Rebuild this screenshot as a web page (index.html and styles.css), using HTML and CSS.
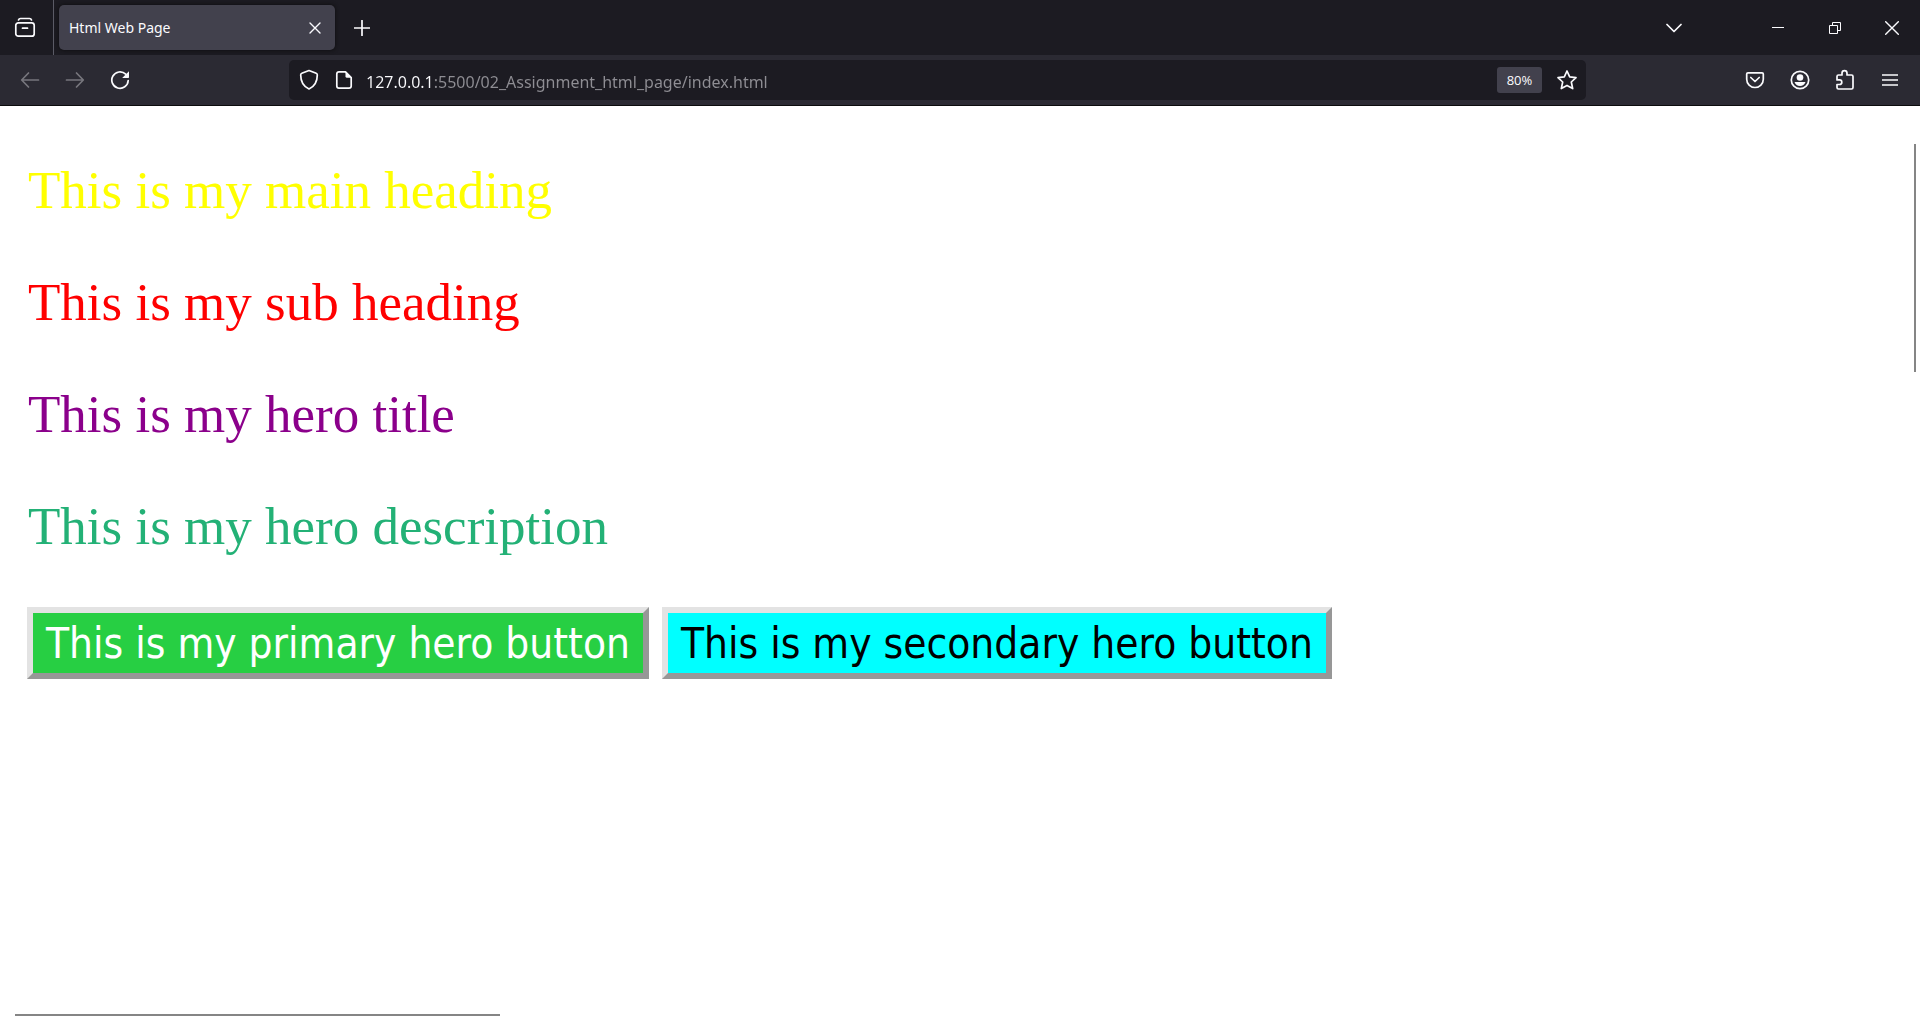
FILE: index.html
```html
<!DOCTYPE html>
<html lang="en">
<head>
<meta charset="utf-8">
<title>Html Web Page</title>
<link rel="stylesheet" href="styles.css">
</head>
<body>
<header class="chrome">
  <div class="tabs">
    <button class="icon-btn view-btn" aria-label="View">
      <svg width="22" height="22" viewBox="0 0 22 22"><path d="M4.500 3Q5 1.500 6.500 1.500h9Q17 1.500 17.500 3"/><rect x="1.800" y="5.800" width="18.400" height="13.400" rx="2.500"/><path d="M8.500 11.200h5"/></svg>
    </button>
    <div class="tab">
      <span class="tab-title">Html Web Page</span>
      <button class="tab-close" aria-label="Close tab"><svg width="12" height="12" viewBox="0 0 12 12"><path class="cross" d="M1 1l10 10M11 1L1 11"/></svg></button>
    </div>
    <button class="icon-btn" aria-label="New tab"><svg width="16" height="16" viewBox="0 0 16 16"><path d="M8 .500v15M.500 8h15"/></svg></button>
    <div class="grow"></div>
    <button class="icon-btn list-btn" aria-label="List all tabs"><svg width="16" height="10" viewBox="0 0 16 10"><path d="M1 1.500l7 7 7-7"/></svg></button>
    <button class="win-btn" aria-label="Minimize"><svg width="12" height="12" viewBox="0 0 12 12"><path class="thin" d="M0 5.500h12"/></svg></button>
    <button class="win-btn" aria-label="Restore"><svg width="12" height="12" viewBox="0 0 12 12"><path class="thin" d="M.500 3.500h8v8h-8zM3.500 3V.500h8v8H9"/></svg></button>
    <button class="win-btn" aria-label="Close"><svg width="14" height="14" viewBox="0 0 14 14"><path class="cross" d="M.700.700l12.600 12.600M13.300.700L.700 13.300"/></svg></button>
  </div>
  <div class="toolbar">
    <button class="icon-btn" aria-label="Back" disabled><svg width="20" height="18" viewBox="0 0 20 18"><path d="M18.500 9H2M8.500 2L1.700 9l6.800 7"/></svg></button>
    <button class="icon-btn" aria-label="Forward" disabled><svg width="20" height="18" viewBox="0 0 20 18"><path d="M1.500 9H18M11.500 2l6.800 7-6.800 7"/></svg></button>
    <button class="icon-btn" aria-label="Reload"><svg width="20" height="20" viewBox="0 0 20 20"><path d="M18.200 10.500A8.200 8.200 0 1 1 15.700 4.200"/><path class="solid" d="M19 1.200v6.100q0 .700-.700.700h-6.100z"/></svg></button>
    <div class="spacer"></div>
    <div class="urlbar">
      <button class="url-btn" aria-label="Protections"><svg width="20" height="22" viewBox="0 0 20 22"><path d="M10 1.500L17.200 4.300Q18.300 4.700 18.300 6c0 6.500-2.800 11.500-8.300 14C4.500 17.500 1.700 12.500 1.700 6Q1.700 4.700 2.800 4.300z"/></svg></button>
      <button class="url-btn" aria-label="Site information"><svg width="18" height="20" viewBox="0 0 18 20"><path d="M10.500 1.800H4Q1.800 1.800 1.800 4v12Q1.800 18.200 4 18.200h10q2.200 0 2.200-2.200V7.500z"/><path class="solid" d="M10.500 1.200l6.500 6.500h-5q-1.500 0-1.500-1.500z"/></svg></button>
      <input class="url" type="text" aria-label="Address" value="127.0.0.1:5500/02_Assignment_html_page/index.html">
      <button class="zoom">80%</button>
      <button class="url-btn" aria-label="Bookmark"><svg width="22" height="22" viewBox="0 0 22 22"><path d="M11 2l2.700 5.900 6.300.700-4.700 4.400 1.400 6.600L11 16.400l-5.700 3.200 1.400-6.600L2 8.600l6.300-.700z"/></svg></button>
    </div>
    <div class="spacer"></div>
    <button class="icon-btn" aria-label="Pocket"><svg width="20" height="18" viewBox="0 0 20 18"><path d="M3 1.800h14q1.300 0 1.300 1.300v5.100a8.300 8.300 0 0 1-16.600 0V3.100Q1.700 1.800 3 1.800zM5.800 6.500L10 10.500l4.200-4"/></svg></button>
    <button class="icon-btn" aria-label="Account"><svg width="20" height="20" viewBox="0 0 20 20"><circle cx="10" cy="10" r="8.700"/><circle class="solid" cx="10" cy="7.500" r="3.300"/><path class="solid" d="M4.500 12h11q-1.500 4-5.500 4t-5.500-4z"/></svg></button>
    <button class="icon-btn" aria-label="Extensions"><svg width="20" height="22" viewBox="0 0 20 22"><path d="M2 9.500V7.500Q2 6 3.500 6H7V4.200a2.500 2.500 0 0 1 5 0V6h4.500Q18 6 18 7.500v11q0 1.500-1.500 1.500h-13Q2 20 2 18.500v-3h2.500a2.300 2.300 0 0 0 0-4.600H2z"/></svg></button>
    <button class="icon-btn" aria-label="Menu"><svg width="16" height="14" viewBox="0 0 16 14"><path d="M.500 2h15M.500 7h15M.500 12h15"/></svg></button>
  </div>
</header>
<main class="page">
  <p class="line main-heading">This is my main heading</p>
  <p class="line sub-heading">This is my sub heading</p>
  <p class="line hero-title">This is my hero title</p>
  <p class="line hero-description">This is my hero description</p>
  <div class="actions">
    <button class="hero-btn primary">This is my primary hero button</button>
    <button class="hero-btn secondary">This is my secondary hero button</button>
  </div>
  <div class="scroll-y"></div>
  <div class="scroll-x"></div>
</main>
</body>
</html>
```
FILE: styles.css
```css
* { box-sizing: border-box; }
body {
  margin: 0;
  min-height: 100vh;
  display: flex;
  flex-direction: column;
  background: #fff;
}
button { padding: 0; border: 0; background: none; color: #fbfbfe; }
svg {
  display: block;
  fill: none;
  stroke: currentColor;
  stroke-width: 1.700;
  stroke-linecap: round;
  stroke-linejoin: round;
}
.thin { stroke-width: 1; stroke-linecap: butt; stroke-linejoin: miter; }
.cross { stroke-width: 1.400; }
.solid { fill: currentColor; stroke: none; }

.chrome {
  background: #2b2a33;
  border-bottom: 1px solid #0c0c0d;
  font-family: "Noto Sans", sans-serif;
}
.tabs { display: flex; align-items: center; height: 55px; background: #1c1b22; }
.icon-btn {
  width: 45px;
  height: 45px;
  display: flex;
  align-items: center;
  justify-content: center;
  flex: none;
}
.icon-btn:disabled { color: #77767d; }
.view-btn { width: 54px; height: 55px; padding-right: 4px; border-right: 1px solid #5b5b66; }
.tab {
  display: flex;
  align-items: center;
  justify-content: space-between;
  width: 276px;
  height: 45px;
  margin: 0 4px 0 5px;
  padding: 0 14px 0 10px;
  border-radius: 5px;
  background: #42414d;
  box-shadow: 0 0 4px #0c0c0d;
}
.tab-title { color: #fbfbfe; font-size: 14px; }
.grow { flex: 1; }
.list-btn { margin-right: 53px; }
.win-btn { width: 57px; height: 45px; display: flex; align-items: center; justify-content: center; }

.toolbar { display: flex; align-items: center; height: 50px; padding: 0 8px 0 7px; }
.spacer { flex: 0 1 146px; }
.urlbar {
  flex: 1;
  display: flex;
  align-items: center;
  height: 40px;
  margin-left: 1px;
  padding: 0 2px;
  border-radius: 5px;
  background: #1c1b22;
}
.url-btn { width: 35px; height: 35px; display: flex; align-items: center; justify-content: center; }
.url {
  flex: 1;
  height: 35px;
  margin-left: 5px;
  padding: 3px 0 0;
  border: 0;
  outline: 0;
  font: 16px "Noto Sans", sans-serif;
  color: transparent;
  background: linear-gradient(to right, #fbfbfe 67px, #8f8e94 67px);
  -webkit-background-clip: text;
  background-clip: text;
}
.zoom {
  width: 45px;
  height: 26px;
  margin-right: 7px;
  border-radius: 3px;
  background: #42414d;
  font: 13px "Open Sans", sans-serif;
}

.page { flex: 1; position: relative; padding: 54px 27px 0; }
.line {
  margin: 0 0 52px;
  padding-left: 1px;
  font: 53px/60px "Liberation Serif", serif;
}
.actions { display: flex; flex-wrap: wrap; gap: 13px; margin-top: -1px; }
.main-heading { color: #ff0; }
.sub-heading { color: #f00; }
.hero-title { color: #8b008b; }
.hero-description { color: #23b176; }
.hero-btn {
  height: 72px;
  padding: 2px 13px 0;
  border: 6px solid;
  border-color: #e3e3e3 #979797 #979797 #e3e3e3;
  font: 42px/58px "DejaVu Sans Condensed", "Open Sans", sans-serif;
}
.primary { background: #27cf43; color: #fff; }
.secondary { background: #0ff; color: #000; }
.scroll-y, .scroll-x { position: absolute; background: #858585; }
.scroll-y { top: 38px; right: 4px; width: 2px; height: 228px; }
.scroll-x { left: 15px; bottom: 2px; width: 485px; height: 2px; }
```
